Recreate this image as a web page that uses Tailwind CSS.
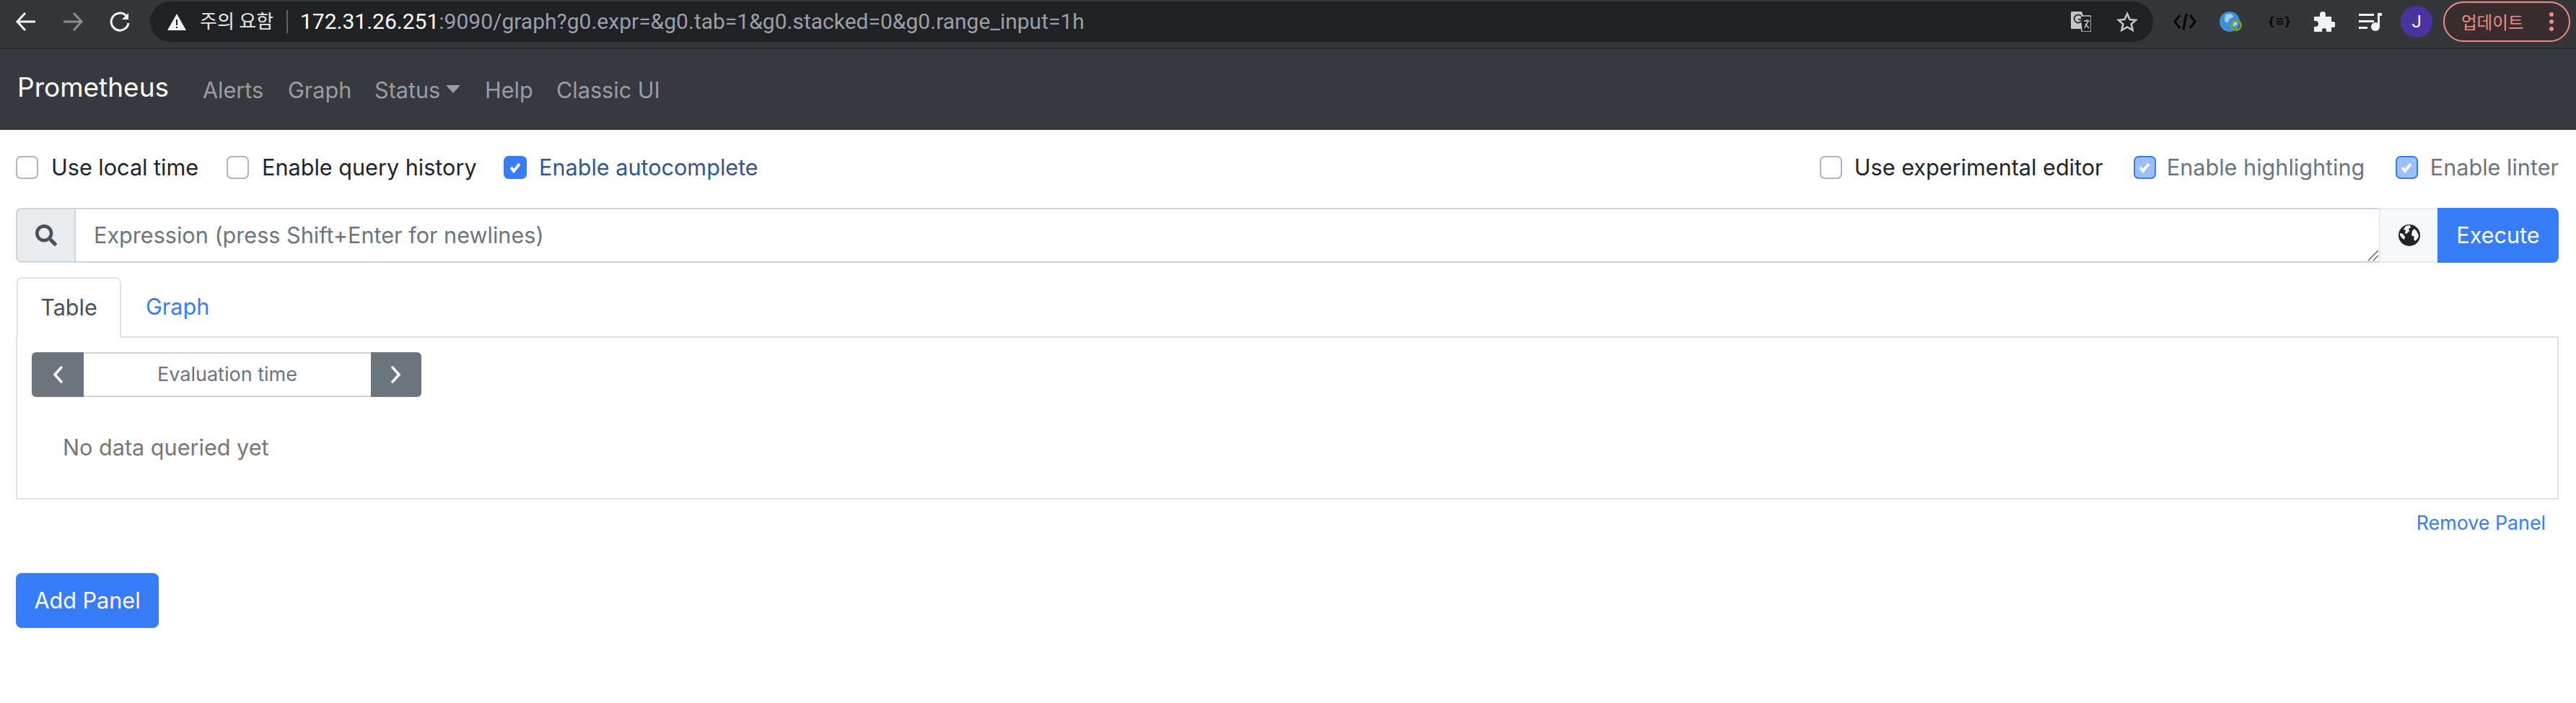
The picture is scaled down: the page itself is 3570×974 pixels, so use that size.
<!DOCTYPE html>
<html lang="en">
<head>
<meta charset="UTF-8">
<title>Prometheus Time Series Collection and Processing Server</title>
<script src="https://cdn.jsdelivr.net/npm/@tailwindcss/browser@4"></script>
</head>
<body class="w-[3570px] h-[974px] overflow-hidden bg-white font-[Inter,'Noto_Sans_CJK_KR',sans-serif] text-[30.6px] leading-[46px] text-[#212529]">

<!-- browser toolbar -->
<div class="h-[68px] bg-[#35363a] border-b-2 border-[#2a2a2a] flex items-start pt-[2px]">
  <div class="w-[208px] h-[56px] flex items-center shrink-0">
    <svg class="ml-[21px] w-[30px] h-[28px]" viewBox="0 0 30 28" fill="none" stroke="#f1f3f4" stroke-width="3"><path d="M28 14H3M14 2L3 14l11 12"/></svg>
    <svg class="ml-[35px] w-[30px] h-[28px]" viewBox="0 0 30 28" fill="none" stroke="#8b8c8f" stroke-width="3"><path d="M2 14h25M16 2l11 12-11 12"/></svg>
    <svg class="ml-[35px] w-[30px] h-[30px]" viewBox="0 0 30 30" fill="none" stroke="#f1f3f4" stroke-width="3"><path d="M24 7a12 12 0 1 0 3 10"/><path d="M27 3v9h-9" fill="#f1f3f4" stroke="none"/></svg>
  </div>
  <div class="w-[2776px] h-[56px] rounded-full bg-[#202124] flex items-center font-[Roboto,'Noto_Sans_CJK_KR',sans-serif] text-[30px] shrink-0">
    <svg class="ml-[24px] w-[26px] h-[23px]" viewBox="0 0 26 23"><path d="M13 0L26 23H0z" fill="#f1f3f4"/><path d="M12 8h2v8h-2zM12 18h2v2h-2z" fill="#202124"/></svg>
    <span class="ml-[19px] w-[103px] text-[#e8eaed] text-[26px] whitespace-nowrap">주의 요함</span>
    <span class="ml-[17px] w-[2px] h-[32px] bg-[#5f6368]"></span>
    <span class="ml-[17px] whitespace-nowrap"><span class="text-white">172.31.26.251</span><span class="text-[#9aa0a6]">:9090/graph?g0.expr=&amp;g0.tab=1&amp;g0.stacked=0&amp;g0.range_input=1h</span></span>
    <svg class="ml-auto w-[28px] h-[28px]" viewBox="0 0 28 28"><path d="M0 1a1 1 0 0 1 1-1h14l8 24H1a1 1 0 0 1-1-1z" fill="#c4c7c5"/><path d="M13 6h14a1 1 0 0 1 1 1v20a1 1 0 0 1-1 1H15z" fill="#202124" stroke="#c4c7c5" stroke-width="1.5"/><path d="M14 6a5.5 5.5 0 1 0 1.5 5H10" fill="none" stroke="#35363a" stroke-width="2"/><path d="M18 13h8M22 11v2M19 23l5-10M20 17l5 6" fill="none" stroke="#c4c7c5" stroke-width="1.5"/></svg>
    <svg class="ml-[35px] mr-[21px] w-[30px] h-[29px]" viewBox="0 0 30 29" fill="none" stroke="#c4c7c5" stroke-width="2.6"><path d="M15 3l3.6 8 8.4.8-6.3 5.6 1.9 8.4L15 21.4l-7.6 4.4 1.9-8.4L3 11.8l8.4-.8z"/></svg>
  </div>
  <div class="flex-1 h-[56px] flex items-center">
    <svg class="ml-[28px] w-[32px] h-[24px]" viewBox="0 0 32 24" fill="none" stroke="#0b0b0b" stroke-width="3.4"><path d="M9 3L2 12l7 9M23 3l7 9-7 9M18 1l-4 22"/></svg>
    <svg class="ml-[32px] w-[32px] h-[28px]" viewBox="0 0 32 28"><ellipse cx="14" cy="14" rx="14" ry="14" fill="#3f8fd6"/><path d="M8 4l8-1 4 4-6 3-3 6-4-3zM18 14l5-1 2 5-6 3z" fill="#a5cdea"/><circle cx="23" cy="19" r="6.5" fill="none" stroke="#7a9a2e" stroke-width="3"/></svg>
    <span class="ml-[34px] w-[26px] h-[28px] text-[16px] leading-[28px] text-[#0b0b0b] font-bold text-center font-['DejaVu_Sans',sans-serif] whitespace-nowrap tracking-[-1px]">{≡}</span>
    <svg class="ml-[38px] w-[30px] h-[28px]" viewBox="0 0 30 28"><path d="M1 7h8V4a4 4 0 0 1 8 0v3h8v7h2a4 4 0 0 1 0 8h-2v6h-7v-2a3 3 0 0 0-6 0v2H1v-7h2a4 4 0 0 0 0-8H1z" fill="#f1f3f4"/></svg>
    <svg class="ml-[33px] w-[32px] h-[26px]" viewBox="0 0 32 26"><path d="M0 2h21v3H0zM0 11h21v3H0zM0 20h12v3H0z" fill="#f1f3f4"/><path d="M26 1h6v4h-3v16h-3z" fill="#f1f3f4"/><circle cx="23" cy="20" r="6" fill="#f1f3f4"/></svg>
    <span class="ml-[26px] w-[44px] h-[44px] rounded-full bg-[#4a32a0] text-white text-[24px] leading-[44px] text-center font-[Roboto,sans-serif]">J</span>
    <span class="ml-[15px] w-[176px] h-[56px] rounded-full border-2 border-[#ee8d82] bg-[#3a2d30] flex items-center font-['Noto_Sans_CJK_KR',sans-serif] text-[23.500px] text-[#ee8d82] whitespace-nowrap">
      <span class="ml-[23px]">업데이트</span>
      <svg class="ml-auto mr-[21px] w-[6px] h-[26px]" viewBox="0 0 6 26" fill="#ee8d82"><circle cx="3" cy="3" r="3"/><circle cx="3" cy="13" r="3"/><circle cx="3" cy="23" r="3"/></svg>
    </span>
  </div>
</div>

<!-- prometheus navbar -->
<nav class="h-[112px] bg-[#363a3f] flex items-center pl-[24px] whitespace-nowrap text-[#9b9d9f] pt-[2px]">
  <a class="text-white text-[37px] w-[257px] -mt-[8px]">Prometheus</a>
  <a class="w-[118px]">Alerts</a>
  <a class="w-[120px]">Graph</a>
  <a class="w-[153px] flex items-center">Status<span class="ml-[8px] w-0 h-0 border-x-[10px] border-x-transparent border-t-[11px] border-t-[#9b9d9f] -mt-[3px]"></span></a>
  <a class="w-[99px]">Help</a>
  <a>Classic UI</a>
</nav>

<main class="pl-[22px] pr-[24px]">
  <!-- options -->
  <div class="h-[108px] pt-[36px] flex justify-between whitespace-nowrap">
    <div class="flex h-[32px] items-center">
      <span class="w-[31px] h-[32px] rounded-[7px] border-2 border-[#adb5bd] bg-white"></span>
      <span class="ml-[18px] w-[243px]">Use local time</span>
      <span class="w-[31px] h-[32px] rounded-[7px] border-2 border-[#adb5bd] bg-white"></span>
      <span class="ml-[18px] w-[335px]">Enable query history</span>
      <span class="w-[32px] h-[32px] rounded-[7px] bg-[#377df7] flex items-center justify-center">
        <svg class="w-[18px] h-[16px]" viewBox="0 0 18 16" fill="none" stroke="#fff" stroke-width="4"><path d="M3 8l4 5 8-10"/></svg>
      </span>
      <span class="ml-[17px] text-[#34568b]">Enable autocomplete</span>
    </div>
    <div class="flex h-[32px] items-center">
      <span class="w-[31px] h-[32px] rounded-[7px] border-2 border-[#adb5bd] bg-white"></span>
      <span class="ml-[17px] w-[387px]">Use experimental editor</span>
      <span class="w-[31px] h-[32px] rounded-[7px] border-2 border-[#377df7] bg-[#9bbffb] flex items-center justify-center">
        <svg class="w-[18px] h-[16px]" viewBox="0 0 18 16" fill="none" stroke="#fff" stroke-width="4"><path d="M3 8l4 5 8-10"/></svg>
      </span>
      <span class="ml-[15px] w-[317px] text-[#6c757d]">Enable highlighting</span>
      <span class="w-[31px] h-[32px] rounded-[7px] border-2 border-[#377df7] bg-[#9bbffb] flex items-center justify-center">
        <svg class="w-[18px] h-[16px]" viewBox="0 0 18 16" fill="none" stroke="#fff" stroke-width="4"><path d="M3 8l4 5 8-10"/></svg>
      </span>
      <span class="ml-[17px] text-[#6c757d]">Enable linter</span>
    </div>
  </div>

  <!-- expression input -->
  <div class="h-[76px] flex">
    <div class="w-[83px] bg-[#e9ecef] border-2 border-[#ced4da] rounded-l-[8px] flex items-center justify-center">
      <svg class="w-[30px] h-[30px]" viewBox="0 0 512 512" fill="#495057"><path d="M505 442.7L405.3 343c-4.500-4.500-10.600-7-17-7H372c27.600-35.300 44-79.700 44-128C416 93.100 322.900 0 208 0S0 93.100 0 208s93.100 208 208 208c48.300 0 92.700-16.400 128-44v16.300c0 6.400 2.500 12.500 7 17l99.700 99.700c9.400 9.400 24.600 9.400 33.900 0l28.300-28.300c9.400-9.400 9.400-24.600.1-34zM208 336c-70.700 0-128-57.200-128-128 0-70.700 57.200-128 128-128 70.700 0 128 57.200 128 128 0 70.700-57.200 128-128 128z"/></svg>
    </div>
    <div class="relative flex-1 border-y-2 border-[#ced4da] flex items-center pl-[25px] text-[#6c757d]">
      Expression (press Shift+Enter for newlines)
      <svg class="absolute right-0 bottom-0 w-[16px] h-[16px]" viewBox="0 0 16 16" fill="none" stroke="#555" stroke-width="1.2"><path d="M15 1L1 15M15 8l-7 7"/></svg>
    </div>
    <div class="w-[81px] bg-[#f8f9fa] border-y-2 border-l-2 border-[#e9ecef] flex items-center justify-center">
      <svg class="w-[30px] h-[30px]" viewBox="0 0 30 30"><circle cx="15" cy="15" r="15" fill="#212529"/><path d="M10 2l6-1 1 3-3 2 1 3-4 4-2-1 1-4-3-1zM19 9l3-3 3 3 3 6-1 4-4 4-2-3 1-3-4-2zM2 12l4 1 3 4-1 4-3-2-3-4z" fill="#fff"/></svg>
    </div>
    <div class="w-[168px] bg-[#377df7] text-white rounded-r-[8px] flex items-center justify-center">Execute</div>
  </div>

  <!-- tabs -->
  <div class="mt-[20px] h-[84px] flex border-b-2 border-[#dee2e6]">
    <div class="w-[145px] h-[84px] ml-[1px] border-2 border-b-0 border-[#dee2e6] rounded-t-[8px] bg-white flex items-center justify-center text-[#495057] pb-[2px]">Table</div>
    <div class="ml-[34px] h-[82px] flex items-center text-[#377df7]">Graph</div>
  </div>

  <!-- panel body -->
  <div class="h-[224px] border-2 border-t-0 border-[#dee2e6] pt-[20px] px-[20px]">
    <div class="h-[62px] w-[540px] flex text-[#6c757d] text-[27px]">
      <div class="w-[72px] bg-[#6c757d] rounded-l-[6px] flex items-center justify-center">
        <svg class="w-[16px] h-[26px]" viewBox="0 0 16 26" fill="none" stroke="#fff" stroke-width="3.5" stroke-linecap="round"><path d="M13 3L4 13l9 10"/></svg>
      </div>
      <div class="flex-1 border-y-2 border-[#ced4da] flex items-center justify-center">Evaluation time</div>
      <div class="w-[70px] bg-[#6c757d] rounded-r-[6px] flex items-center justify-center">
        <svg class="w-[16px] h-[26px]" viewBox="0 0 16 26" fill="none" stroke="#fff" stroke-width="3.5" stroke-linecap="round"><path d="M3 3l9 10-9 10"/></svg>
      </div>
    </div>
    <div class="mt-[20px] h-[99px] bg-[#fefefe] rounded-[8px] pl-[43px] flex items-center text-[#777]">No data queried yet</div>
  </div>

  <div class="flex justify-end pr-[18px] mt-[12px] text-[26.8px] leading-[40px] text-[#377df7]">Remove Panel</div>

  <button class="mt-[50px] w-[198px] h-[76px] rounded-[8px] bg-[#377df7] text-white">Add Panel</button>
</main>
</body>
</html>
